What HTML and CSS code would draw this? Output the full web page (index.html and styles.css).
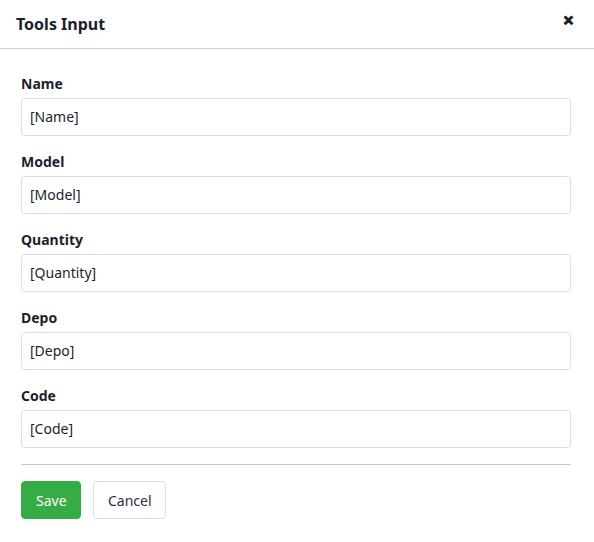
FILE: index.html
```html
<!DOCTYPE html>
<html>
<head>
<meta charset="utf-8">
<link rel="stylesheet" href="styles.css">
</head>
<body>
<div class="modal">
  <div class="modal-header">
    <h1 class="title">Tools Input</h1>
    <span class="close">&#x2715;</span>
  </div>
  <form class="modal-body">
    <div class="field">
      <label class="label">Name</label>
      <div class="input">[Name]</div>
    </div>
    <div class="field">
      <label class="label">Model</label>
      <div class="input">[Model]</div>
    </div>
    <div class="field">
      <label class="label">Quantity</label>
      <div class="input">[Quantity]</div>
    </div>
    <div class="field">
      <label class="label">Depo</label>
      <div class="input">[Depo]</div>
    </div>
    <div class="field">
      <label class="label">Code</label>
      <div class="input">[Code]</div>
    </div>
    <hr class="divider">
    <div class="actions">
      <button type="button" class="btn btn-primary">Save</button>
      <button type="button" class="btn btn-default">Cancel</button>
    </div>
  </form>
</div>
</body>
</html>
```
FILE: styles.css
```css
html, body {
  margin: 0;
  padding: 0;
  background: #ffffff;
}
body {
  font-family: "Noto Sans", "Open Sans", sans-serif;
  color: #1b1f2b;
}
.modal {
  width: 594px;
}
.modal-header {
  height: 48px;
  border-bottom: 1px solid #cfcfcf;
  display: flex;
  align-items: center;
  justify-content: space-between;
  padding: 0 20px 0 16px;
}
.title {
  margin: 0;
  font-size: 16px;
  font-weight: 700;
  line-height: 20px;
  color: #1b1f2b;
}
.close {
  font-size: 13px;
  font-weight: 900;
  color: #1b1f2b;
  margin-top: -8px;
  -webkit-text-stroke: 1px #1b1f2b;
}
.modal-body {
  padding: 25px 23px 20px 21px;
}
.field {
  display: flex;
  flex-direction: column;
  margin-bottom: 16px;
}
.label {
  font-size: 14px;
  font-weight: 700;
  line-height: 20px;
  margin-bottom: 4px;
  color: #1b1f2b;
}
.input {
  height: 38px;
  box-sizing: border-box;
  border: 1px solid #dedede;
  border-radius: 4px;
  padding: 0 8px;
  font-size: 14px;
  line-height: 36px;
  color: #1b1f2b;
}
.divider {
  border: 0;
  border-top: 1px solid #c8c8c8;
  margin: 0 0 16px 0;
}
.actions {
  display: flex;
  gap: 12px;
}
.btn {
  height: 38px;
  box-sizing: border-box;
  border-radius: 4px;
  font-family: "Noto Sans", "Open Sans", sans-serif;
  font-size: 14px;
  padding: 0 14px;
  cursor: pointer;
}
.btn-primary {
  background: #35ad44;
  border: 1px solid #35ad44;
  color: #ffffff;
  width: 60px;
}
.btn-default {
  background: #ffffff;
  border: 1px solid #dedede;
  color: #2d3046;
  width: 73px;
}
```
